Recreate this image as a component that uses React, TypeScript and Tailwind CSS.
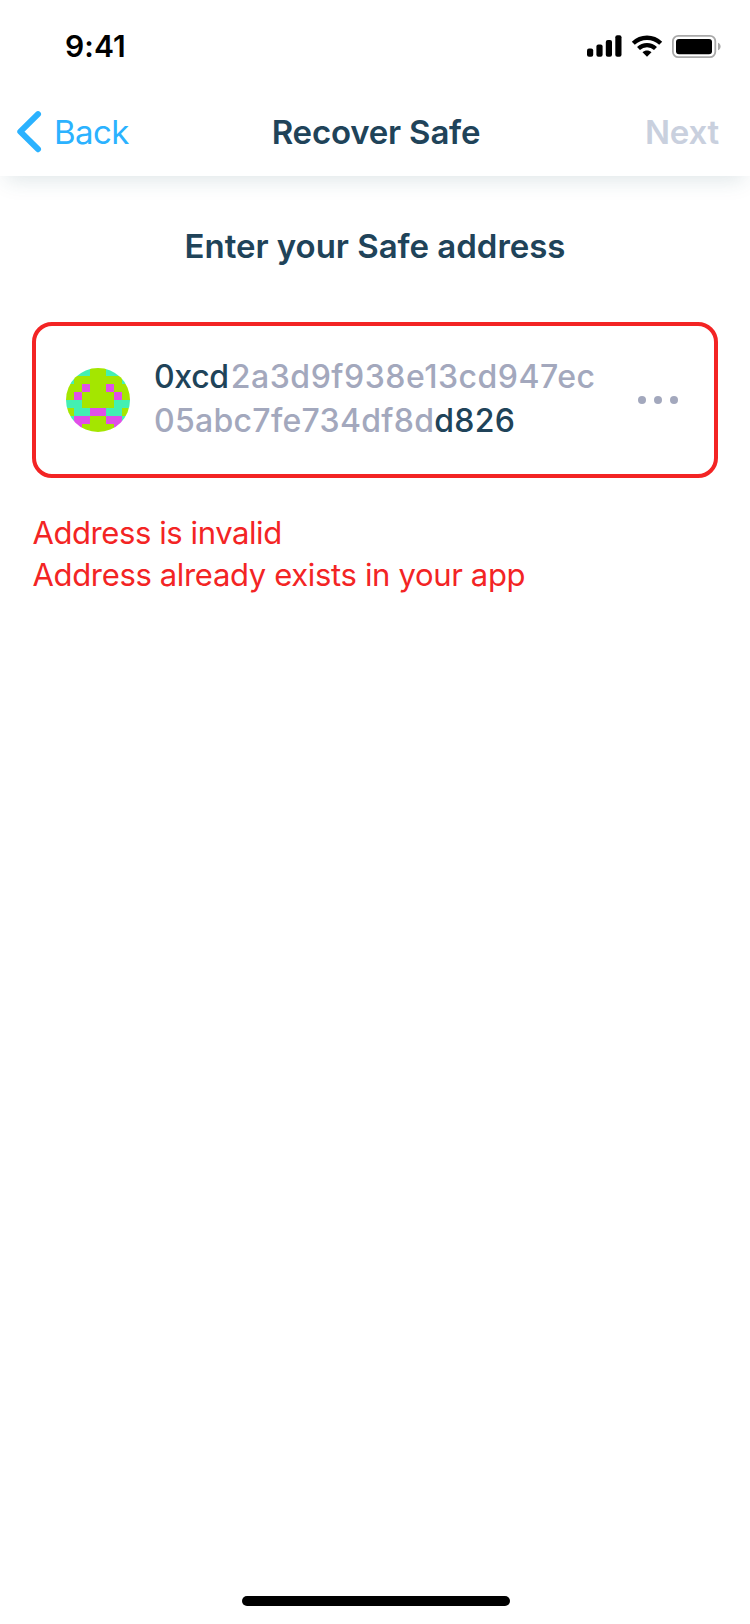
import React from 'react';

const AVATAR_ROWS = [
  'tttggttt',
  'tggggggt',
  'ggmggmgg',
  'gmggggmg',
  'ttggggtt',
  'gttmmttg',
  'tmmggmmt',
  'gmggggmg',
];

const AVATAR_FILL: Record<string, string> = {
  g: '#a4e600',
  t: '#43f0b2',
  m: '#e04fe8',
};

function SignalIcon() {
  return (
    <svg width="35" height="22" viewBox="0 0 35 22" fill="#000">
      <rect x="0" y="13.6" width="6.2" height="8.1" rx="2" />
      <rect x="9.4" y="9.6" width="6.2" height="12.1" rx="2" />
      <rect x="18.8" y="5" width="6.2" height="16.7" rx="2" />
      <rect x="28.3" y="0.3" width="6.2" height="21.4" rx="2" />
    </svg>
  );
}

function WifiIcon() {
  return (
    <svg width="32" height="22" viewBox="0 0 32 22" fill="none" stroke="#000" strokeWidth="4.3">
      <path d="M2.3 8.3C10 0.9 22 0.9 29.7 8.3" />
      <path d="M7.5 13.5C12.3 9 19.7 9 24.5 13.5" />
      <path d="M11.5 17.3C14.1 15 17.9 15 20.5 17.3L16 21.8Z" fill="#000" stroke="none" />
    </svg>
  );
}

function BatteryIcon() {
  return (
    <svg width="49" height="23" viewBox="0 0 49 23">
      <rect x="0.9" y="0.9" width="42.4" height="21.2" rx="5.4" fill="none" stroke="#a9a9a9" strokeWidth="1.8" />
      <rect x="4" y="4" width="36" height="15.2" rx="3" fill="#000" />
      <path d="M46 7.7C47.6 8.3 48.6 9.8 48.6 11.5S47.6 14.7 46 15.3Z" fill="#a9a9a9" />
    </svg>
  );
}

function StatusBar() {
  return (
    <div className="flex h-[88px] items-start justify-between pt-[34px] pr-[29px] pl-[65px]">
      <span className="-mt-[6px] text-[30px] leading-[36px] font-semibold tracking-[0.1px] text-black">9:41</span>
      <div className="flex items-start">
        <div className="mt-px mr-[9px]"><SignalIcon /></div>
        <div className="mt-px mr-[9px]"><WifiIcon /></div>
        <div className="mt-[0.5px]"><BatteryIcon /></div>
      </div>
    </div>
  );
}

function NavBar() {
  return (
    <div className="grid h-[88px] grid-cols-[1fr_auto_1fr] items-center text-[33px] leading-[40px]">
      <button className="flex items-center pl-[16px] text-[#2bb2ff]">
        <svg width="26" height="42" viewBox="0 0 26 42" fill="none" stroke="currentColor" strokeWidth="6" strokeLinecap="round" strokeLinejoin="round">
          <path d="M22 3.2L4.3 20.7L22 38.2" />
        </svg>
        <span className="ml-[12px] tracking-[-0.6px]">Back</span>
      </button>
      <h1 className="pl-[2px] font-semibold tracking-[-0.2px] text-[#204359]">Recover Safe</h1>
      <button className="pr-[31px] text-right font-semibold tracking-[-0.2px] text-[#c9d0de]">Next</button>
    </div>
  );
}

function Avatar() {
  return (
    <svg className="size-16 rounded-full" viewBox="0 0 64 64" shapeRendering="crispEdges">
      {AVATAR_ROWS.flatMap((row, y) =>
        row.split('').map((cell, x) => (
          <rect key={`${x}-${y}`} x={x * 8} y={y * 8} width="8" height="8" fill={AVATAR_FILL[cell]} />
        )),
      )}
    </svg>
  );
}

function AddressField() {
  return (
    <div className="mx-8 mt-[56px] flex h-[156px] items-center rounded-[20px] border-4 border-[#f32424] pr-[36px] pl-[30px]">
      <Avatar />
      <div className="-mt-[2px] ml-[24px] text-[32px] leading-[44px] font-medium whitespace-nowrap text-[#a3a8bd]">
        <div className="tracking-[0.52px]">
          <span className="mr-[2px] tracking-[-0.3px] text-[#204359]">0xcd</span>2a3d9f938e13cd947ec
        </div>
        <div className="tracking-[0.29px]">
          05abc7fe734df8d<span className="text-[#204359]">d826</span>
        </div>
      </div>
      <div className="ml-auto flex gap-2">
        <span className="size-2 rounded-full bg-[#a3a8bd]" />
        <span className="size-2 rounded-full bg-[#a3a8bd]" />
        <span className="size-2 rounded-full bg-[#a3a8bd]" />
      </div>
    </div>
  );
}

export default function App() {
  return (
    <div className="flex h-[1624px] w-[750px] flex-col bg-white font-['Inter',sans-serif]">
      <header className="bg-white shadow-[0_10px_20px_-6px_rgba(40,84,100,0.15)]">
        <StatusBar />
        <NavBar />
      </header>
      <main className="flex flex-1 flex-col">
        <h2 className="mt-[50px] text-center text-[33px] leading-[40px] font-semibold tracking-[-0.03px] text-[#204359]">
          Enter your Safe address
        </h2>
        <AddressField />
        <div className="mt-[34px] ml-[32.5px] text-[31px] leading-[42px] text-[#f32424]">
          <p className="tracking-[-0.41px]">Address is invalid</p>
          <p className="tracking-[-0.34px]">Address already exists in your app</p>
        </div>
      </main>
      <div className="mb-[18px] h-[10px] w-[268px] translate-x-px self-center rounded-full bg-black" />
    </div>
  );
}
